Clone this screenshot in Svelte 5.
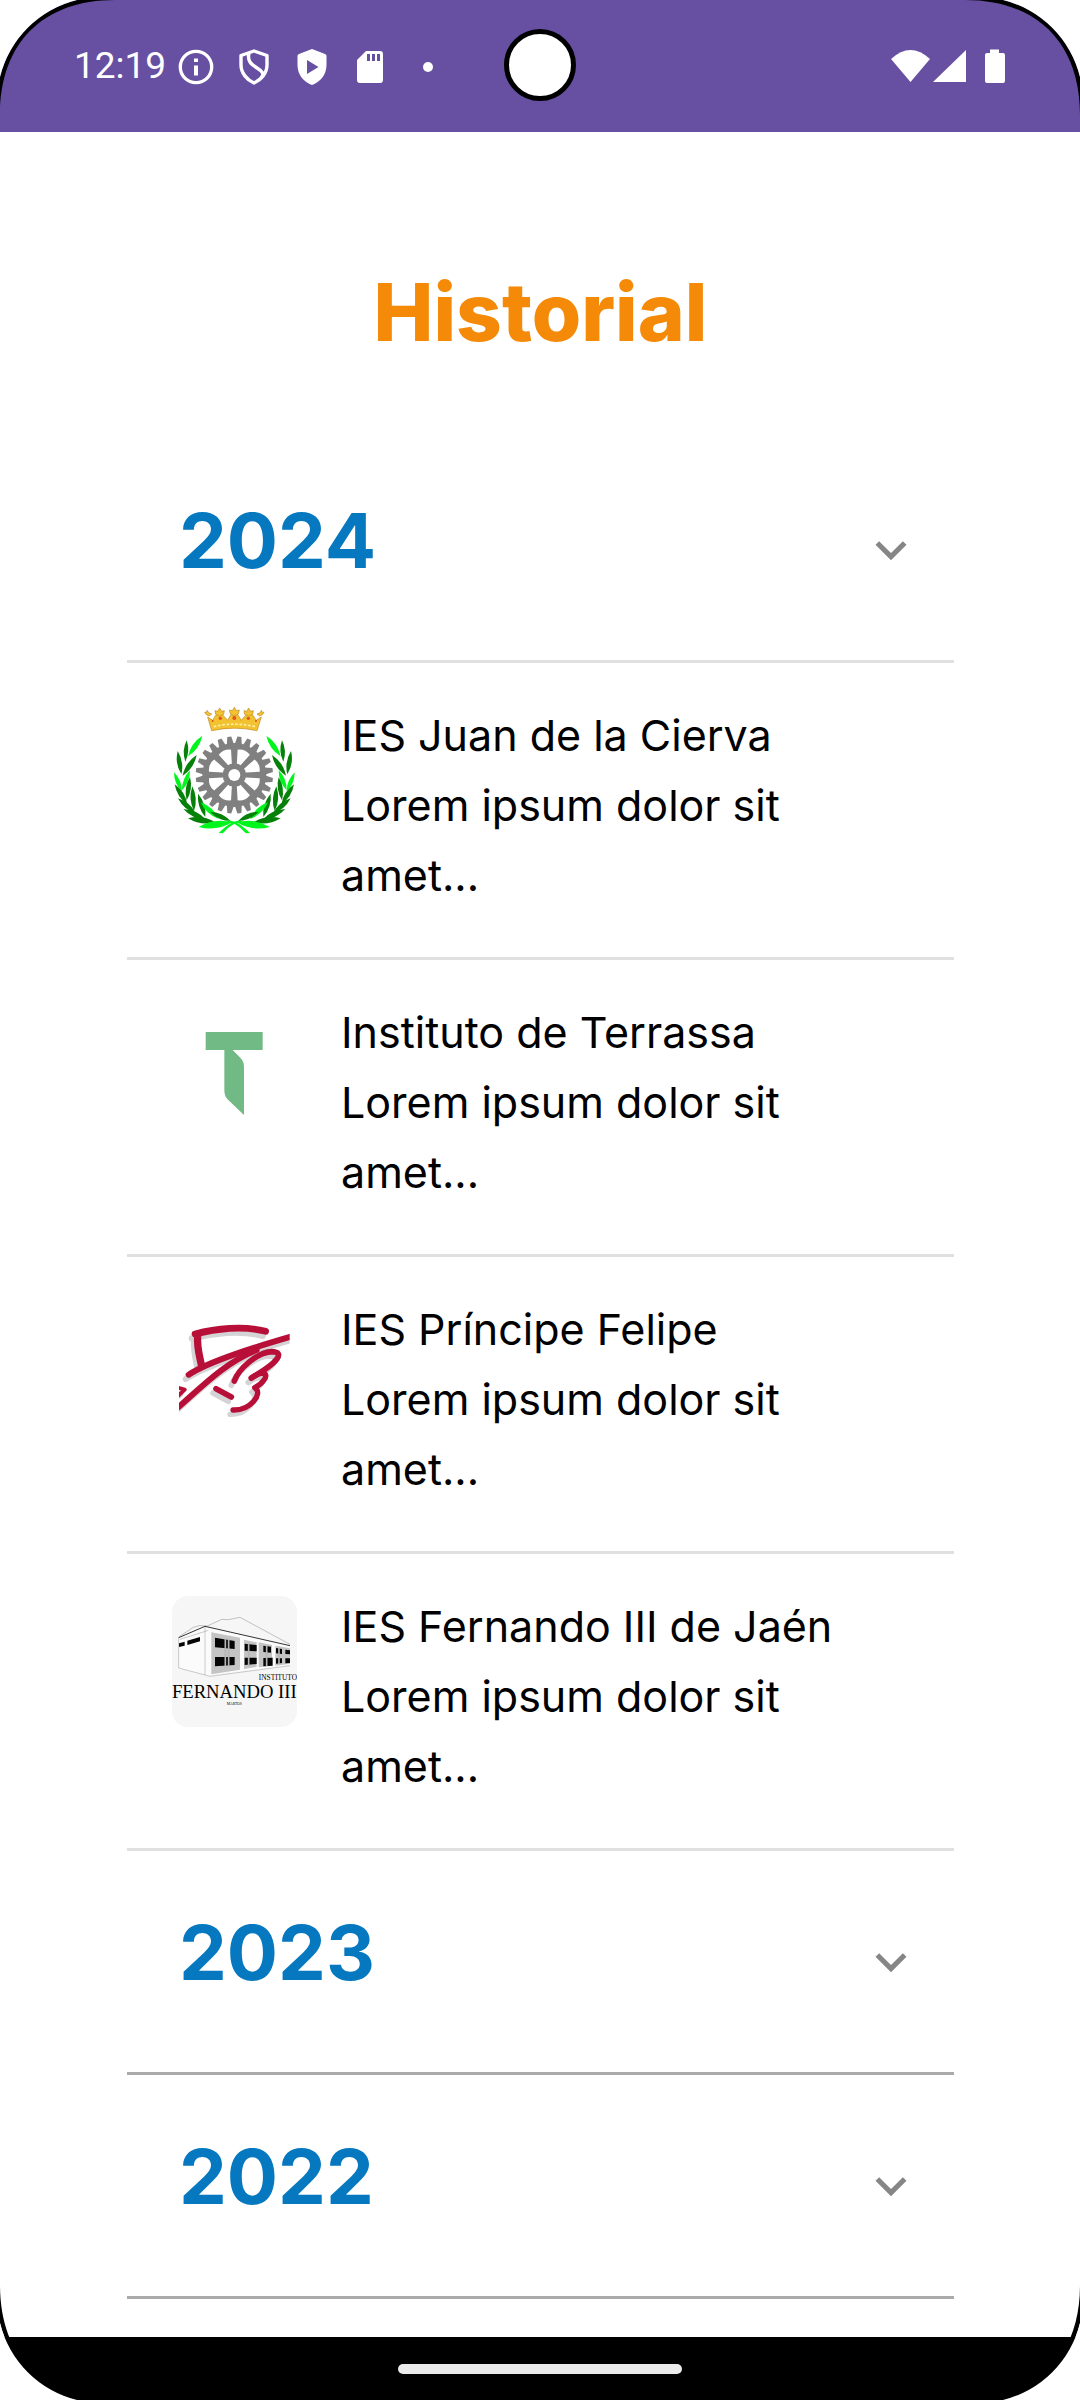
<script>
  let years = $state([
    {
      year: '2024',
      open: true,
      schools: [
        { logo: 'cierva', name: 'IES Juan de la Cierva' },
        { logo: 'terrassa', name: 'Instituto de Terrassa' },
        { logo: 'felipe', name: 'IES Príncipe Felipe' },
        { logo: 'fernando', name: 'IES Fernando III de Jaén' }
      ]
    },
    { year: '2023', open: false, schools: [] },
    { year: '2022', open: false, schools: [] }
  ]);

  const summary = 'Lorem ipsum dolor sit amet...';

  const teeth = Array.from({ length: 24 }, (_, i) => i * 15 + 7.5);
  const windows = Array.from({ length: 8 }, (_, i) => i * 45 + 22.5);

  const light = '#00f51d';
  const dark = '#058009';
  // base x, base y, tip x, tip y, colour
  const leaves = [
    [84, 184, 127, 122, light],
    [76, 200, 80, 136, dark],
    [68, 242, 110, 180, dark],
    [64, 238, 53, 168, dark],
    [66, 286, 90, 226, light],
    [66, 290, 42, 232, light],
    [80, 316, 90, 246, dark],
    [82, 328, 44, 268, dark],
    [102, 348, 97, 274, dark],
    [108, 356, 54, 310, dark],
    [136, 366, 114, 296, dark],
    [138, 374, 70, 342, dark],
    [176, 372, 122, 322, light],
    [166, 382, 84, 370, dark],
    [212, 378, 150, 350, dark],
    [216, 382, 116, 396, light]
  ];

  function leaf([bx, by, tx, ty]) {
    const mx = bx + (tx - bx) * 0.5;
    const my = by + (ty - by) * 0.5;
    const nx = -(ty - by) * 0.21;
    const ny = (tx - bx) * 0.21;
    return `M${bx} ${by}Q${mx + nx} ${my + ny} ${tx} ${ty}Q${mx - nx} ${my - ny} ${bx} ${by}Z`;
  }
</script>

{#snippet strokes()}
  <path d="M105 102C165 86 250 76 317 94" stroke-width="20" />
  <path d="M113 106C110 140 118 165 124 194" stroke-width="22" />
  <path d="M86 224C150 182 290 140 400 108" stroke-width="18" />
  <path d="M50 326C120 266 190 190 290 150" stroke-width="18" />
  <path d="M223 243C236 206 290 158 335 155C376 156 356 186 274 234" stroke-width="17" />
  <path d="M274 234C300 214 330 216 312 240C304 252 294 258 284 263C312 280 270 332 219 330" stroke-width="16" />
  <path d="M168 266L214 291" stroke-width="17" />
  <path d="M50 262L74 269L50 292" stroke-width="12" />
{/snippet}

{#snippet corner(place)}
  <svg class="corner {place}" viewBox="0 0 115 115" aria-hidden="true">
    <path d="M0 77A105 105 0 0 1 77 0H115C43 0 0 43 0 115Z" fill="#000" />
    <path d="M0 0H77A105 105 0 0 0 0 77Z" fill="#fff" />
  </svg>
{/snippet}

<div class="phone">
  <header class="status">
    <div class="left">
      <time>12:19</time>
      <svg class="slot" viewBox="0 0 58 36" aria-hidden="true">
        <circle cx="29" cy="18" r="15.7" fill="none" stroke="#fff" stroke-width="3.300" />
        <path d="M27 16.500h4v10h-4zM27 9.500h4v3.500h-4z" fill="#fff" />
      </svg>
      <svg class="slot" viewBox="0 0 58 36" aria-hidden="true">
        <g fill="none" stroke="#fff" stroke-width="3.400" stroke-linejoin="round">
          <path d="M29 2L42 6.500V16C42 24 36 31 29 34C22 31 16 24 16 16V6.500Z" />
          <path d="M24 4C22 12 26 15 32 19C37 22 40 25 36 29" />
        </g>
      </svg>
      <svg class="slot" viewBox="0 0 58 36" aria-hidden="true">
        <path fill="#fff" fill-rule="evenodd" d="M29 0L42 5Q43.500 5.500 43.500 7V16C43.500 26 37 33 29 36C21 33 14.500 26 14.500 16V7Q14.500 5.500 16 5ZM24 11V25L35.500 18Z" />
      </svg>
      <svg class="slot" viewBox="0 0 58 36" aria-hidden="true">
        <path fill="#fff" fill-rule="evenodd" d="M25 2H39Q42 2 42 5V31Q42 34 39 34H19Q16 34 16 31V11ZM26 5V12H29V5ZM31 5V12H34V5ZM36 5V12H39V5Z" />
      </svg>
      <svg class="slot" viewBox="0 0 58 36" aria-hidden="true">
        <circle cx="29" cy="18" r="5" fill="#fff" />
      </svg>
    </div>
    <svg class="signals" viewBox="0 0 114 36" aria-hidden="true">
      <path d="M0 10Q19.500 -8 39 10L19.500 33Z" fill="#fff" />
      <path d="M75 1V33H42Z" fill="#fff" />
      <path d="M99 0.500H108V4H112Q114 4 114 6V32Q114 34 112 34H96Q94 34 94 32V6Q94 4 96 4H99Z" fill="#fff" />
    </svg>
    <span class="camera"></span>
  </header>

  <main>
    <h1>Historial</h1>
    {#each years as group (group.year)}
      <section class:open={group.open && group.schools.length > 0}>
        <h2>
          <button type="button" aria-expanded={group.open} onclick={() => (group.open = !group.open)}>
            <span class="year">{group.year}</span>
            <svg class="chevron" viewBox="0 0 24 24" aria-hidden="true">
              <path d="M7.410 8.590L12 13.170l4.590-4.580L18 10l-6 6-6-6z" fill="#868686" />
            </svg>
          </button>
        </h2>
        {#if group.open && group.schools.length}
          <ul>
            {#each group.schools as school (school.name)}
              <li>
                {#if school.logo === 'cierva'}
                  <svg class="logo" viewBox="36 30 375 393" role="img" aria-label={school.name}>
                    <g fill="#808080" transform="translate(223 240)">
                      <circle r="96" />
                      {#each teeth as angle}
                        <path d="M-11 -90L-6 -116H6L11 -90Z" transform="rotate({angle})" />
                      {/each}
                      {#each windows as angle}
                        <path d="M-6 -34Q0 -37 6 -34L20 -74Q0 -85 -20 -74Z" fill="#fff" transform="rotate({angle})" />
                      {/each}
                      <circle r="18" fill="#fff" />
                    </g>
                    {#each leaves as item}
                      <path d={leaf(item)} fill={item[4]} />
                      <path d={leaf(item)} fill={item[4]} transform="translate(446 0) scale(-1 1)" />
                    {/each}
                    <path d="M246 376C214 378 198 394 176 414L188 415C206 396 220 384 246 380Z" fill={light} />
                    <path d="M200 376C232 378 248 394 270 414L258 415C240 396 226 384 200 380Z" fill={light} />
                    <g fill="#f2c230" stroke="#c08a24" stroke-width="2">
                      <path d="M155 107L143 66L158 76L166 62L180 52L190 62L203 76L212 60L223 50L234 60L244 76L256 62L267 52L280 62L288 76L304 66L291 107Q223 92 155 107Z" />
                      <path d="M141 46l6 8 8 3-8 6-8-4-5-7 7-1zM305 46l-6 8-8 3 8 6 8-4 5-7-7-1z" />
                      <path d="M179 39l6 10 8-2-2 11-12 6-12-6-2-11 8 2zM223 37l6 10 9-2-3 12-12 6-12-6-3-12 9 2zM266 39l6 10 8-2-2 11-12 6-12-6-2-11 8 2z" />
                    </g>
                    <path d="M161 95Q223 80 286 95" fill="none" stroke="#fff0a0" stroke-width="5" stroke-dasharray="8 5" />
                    <g fill="#e0561c">
                      <circle cx="181" cy="70" r="5" />
                      <circle cx="223" cy="69" r="6" />
                      <circle cx="265" cy="70" r="5" />
                      <circle cx="158" cy="78" r="3" />
                      <circle cx="288" cy="78" r="3" />
                    </g>
                  </svg>
                {:else if school.logo === 'terrassa'}
                  <svg class="logo" viewBox="36 6 375 393" role="img" aria-label={school.name}>
                    <path d="M137 96H308V150H218L241 173Q252 184 252 200V345L204 299Q193 288 193 272V150H137Z" fill="#72ba85" />
                  </svg>
                {:else if school.logo === 'felipe'}
                  <svg class="logo" viewBox="36 -3 375 393" role="img" aria-label={school.name}>
                    <clipPath id="felipe-edge"><path d="M57 40H389V380H57Z" /></clipPath>
                    <g clip-path="url(#felipe-edge)" fill="none" stroke-linecap="round" stroke-linejoin="round">
                      <g stroke="#d4d4d6" transform="translate(-9 13)">{@render strokes()}</g>
                      <g stroke="#b80f38">{@render strokes()}</g>
                    </g>
                  </svg>
                {:else}
                  <svg class="logo tile" viewBox="36 33 375 393" role="img" aria-label={school.name}>
                    <path d="M56 158L135 124L390 182V240L150 272L55 250Z" fill="#fbfbfb" />
                    <path d="M154 142L240 158V254L154 268ZM252 164L290 172V246L252 252ZM296 172L336 180V242L296 247ZM346 182L390 190V236L346 242Z" fill="#c4c4c4" />
                    <path d="M165 158L224 168V192L165 187ZM165 216H224V240L165 244ZM254 176L290 180V199L254 197ZM254 218H290V237L254 240ZM310 182L333 185V203L310 201ZM310 219L338 218V242L310 244ZM348 189L366 192V207L348 205ZM348 220H366V234L348 236ZM376 194L390 196V208L376 207ZM376 220H390V234L376 235ZM82 167L120 156V169L82 180ZM57 175L74 170V182L57 186Z" fill="#050505" />
                    <path d="M196 160V244M206 162V244M266 174V242M320 180V244M357 188V238" stroke="#b5b5b5" stroke-width="5" />
                    <path d="M56 156L100 127Q118 118 142 123L185 103L205 104L240 97L390 178" fill="none" stroke="#8d8d8d" stroke-width="1.500" />
                    <path d="M56 158L135 124L390 182" fill="none" stroke="#333" stroke-width="3" />
                    <path d="M56 158V249L150 274L390 242M135 126V270M60 163L145 136" fill="none" stroke="#999" stroke-width="1.500" />
                    <text x="411" y="284" text-anchor="end" font-size="22">INSTITUTO</text>
                    <text x="223" y="338" text-anchor="middle" font-size="56">FERNANDO III</text>
                    <text x="223" y="360" text-anchor="middle" font-size="11">MARTOS</text>
                  </svg>
                {/if}
                <div class="info">
                  <h3>{school.name}</h3>
                  <p>{summary}</p>
                </div>
              </li>
            {/each}
          </ul>
        {/if}
      </section>
    {/each}
  </main>

  <footer><span class="handle"></span></footer>

  {@render corner('top-left')}
  {@render corner('top-right')}
  {@render corner('bottom-left')}
  {@render corner('bottom-right')}
</div>

<style>
  :global(body) {
    background: #fff;
  }
  .phone {
    position: relative;
    display: flex;
    flex-direction: column;
    min-height: 100vh;
    overflow: hidden;
    background: #fff;
    color: #000;
    font-family: Inter, 'Open Sans', sans-serif;
  }
  .status {
    position: relative;
    display: flex;
    justify-content: space-between;
    align-items: center;
    height: 132px;
    padding: 0 75px 0 74px;
    box-sizing: border-box;
    background: #6750a2;
    color: #fff;
  }
  .left {
    display: flex;
    align-items: center;
    gap: 0;
  }
  time {
    padding-right: 1px;
    font: 400 37px/44px Roboto, sans-serif;
  }
  .slot {
    width: 58px;
    height: 36px;
    padding-top: 2px;
  }
  .signals {
    width: 114px;
    height: 36px;
    padding-top: 2px;
  }
  .camera {
    position: absolute;
    top: 29px;
    left: calc(50% - 36px);
    width: 72px;
    height: 72px;
    box-sizing: border-box;
    border: 5px solid #000;
    border-radius: 50%;
    background: #fff;
  }
  main {
    flex: 1;
    padding: 0 126px 38px 127px;
  }
  h1, h2, h3, p, ul {
    margin: 0;
    padding: 0;
    font-weight: 400;
  }
  h1 {
    padding: 120px 0 67px;
    color: #f48a07;
    font-size: 80px;
    font-weight: 800;
    line-height: 120px;
    text-align: center;
  }
  section {
    border-bottom: 3px solid #aaa;
  }
  .open {
    border-bottom: 0;
  }
  button {
    display: flex;
    justify-content: space-between;
    align-items: center;
    width: 100%;
    height: 221px;
    padding: 0 32px 0 52px;
    border: 0;
    background: none;
    color: #0578c0;
    font: inherit;
    cursor: pointer;
  }
  .year {
    padding-bottom: 20px;
    font-size: 76px;
    font-weight: 700;
    line-height: 96px;
  }
  .chevron {
    width: 62px;
    height: 62px;
  }
  ul {
    border-top: 3px solid #e0e0e0;
    list-style: none;
  }
  li {
    display: flex;
    align-items: flex-start;
    gap: 44px;
    padding: 37px 45px 47px;
    border-bottom: 3px solid #e0e0e0;
  }
  .logo {
    flex: none;
    width: 125px;
    height: 131px;
    margin-top: 5px;
    border-radius: 16px;
  }
  .tile {
    background: #f6f6f6;
    font-family: 'Liberation Serif', serif;
  }
  .info {
    flex: 1;
    min-width: 0;
  }
  h3, p {
    font-size: 43px;
    line-height: 70px;
  }
  footer {
    display: flex;
    justify-content: center;
    align-items: center;
    height: 63px;
    background: #000;
  }
  .handle {
    width: 284px;
    height: 10px;
    border-radius: 5px;
    background: #ebebeb;
  }
  .corner {
    position: absolute;
    width: 115px;
    height: 115px;
    pointer-events: none;
  }
  .top-left {
    top: 0;
    left: 0;
  }
  .top-right {
    top: 0;
    right: 0;
    transform: scaleX(-1);
  }
  .bottom-left {
    bottom: 0;
    left: 0;
    transform: scaleY(-1);
  }
  .bottom-right {
    right: 0;
    bottom: 0;
    transform: scale(-1, -1);
  }
</style>
